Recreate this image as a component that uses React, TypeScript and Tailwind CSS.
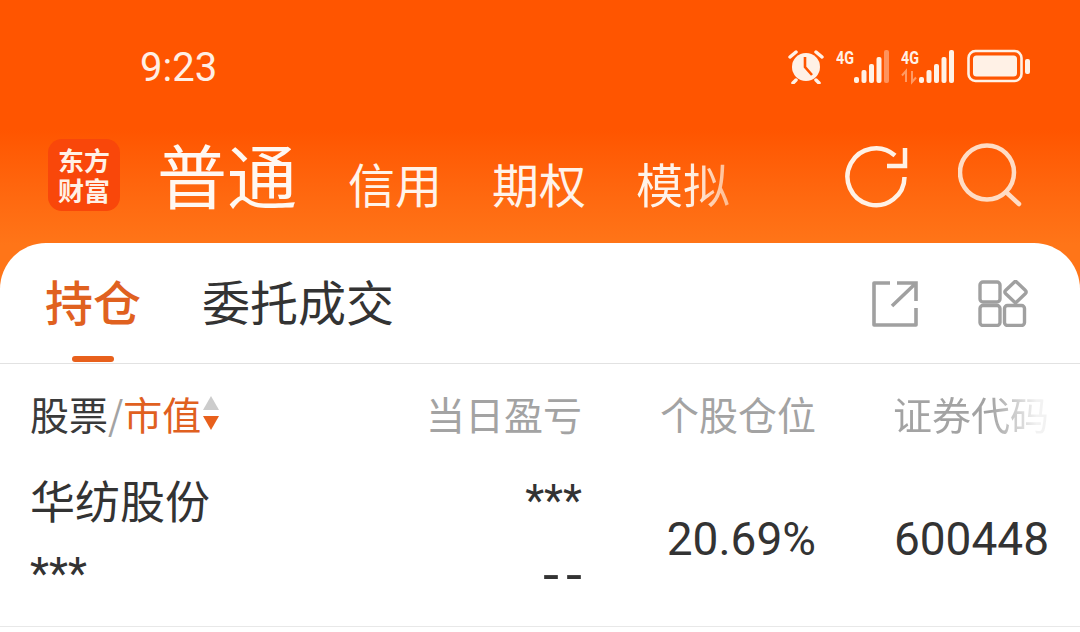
const CJK = "font-['Noto_Sans_CJK_SC','Noto_Sans',sans-serif]";

function Signal({ dim, arrows }: { dim?: boolean; arrows?: boolean }) {
  const bars = [
    { x: 18, h: 6 },
    { x: 25.5, h: 13 },
    { x: 33, h: 19 },
    { x: 40.5, h: 26 },
    { x: 48, h: 33 },
  ];
  return (
    <svg width="53" height="40" viewBox="0 -2 53 40" fill="#fff1e6">
      <text x="0" y="16" fontSize="19" fontWeight="700" fontFamily="Roboto, sans-serif" textLength="18" lengthAdjust="spacingAndGlyphs">4G</text>
      {arrows && <path d="M5 34v-11l-4 4.500M11 23v11l4-4.500" stroke="#ff9a63" strokeWidth="2" fill="none" />}
      {bars.map((b, i) => (
        <rect
          key={b.x}
          x={b.x}
          y={35 - b.h}
          width="5"
          height={b.h}
          rx="2"
          opacity={dim && i === 4 ? 0.4 : 1}
        />
      ))}
    </svg>
  );
}

export default function App() {
  return (
    <div className={`relative flex h-[632px] w-[1080px] flex-col overflow-hidden bg-white ${CJK}`}>
      <div className="h-[288px] shrink-0 bg-gradient-to-b from-[#ff5500] from-[45%] to-[#ff7518] to-[85%]">
        {/* status bar */}
        <div className="flex h-[132px] items-start justify-between pl-[140px] pr-[50px] pt-[46px]">
          <span className="mt-[2px] font-['Roboto',sans-serif] text-[40px] leading-[40px] text-[#ffefe4]">9:23</span>
          <div className="flex items-center gap-[12px]">
            <svg width="36" height="36" viewBox="0 0 36 36" fill="none">
              <circle cx="18" cy="19" r="14" fill="#fff1e6" />
              <path d="M17 9v10l7 8" stroke="#ff5500" strokeWidth="2.600" />
              <path d="M2 9l6-5M34 9l-6-5M8 32l-3 3M28 32l3 3" stroke="#fff1e6" strokeWidth="3.500" strokeLinecap="round" />
            </svg>
            <Signal dim />
            <Signal arrows />
            <svg className="ml-[1px]" width="63" height="34" viewBox="0 0 63 34" fill="none">
              <rect x="1.500" y="2" width="53" height="30" rx="7" stroke="#fff1e6" strokeWidth="2.600" />
              <rect x="6" y="6.500" width="44" height="21" rx="3.500" fill="#fff1e6" />
              <rect x="58" y="10" width="5" height="15" rx="2" fill="#fff1e6" />
            </svg>
          </div>
        </div>

        {/* account tabs */}
        <div className="flex h-[86px] items-center pl-[48px] pr-[58px]">
          <div className="flex h-[72px] w-[72px] flex-col items-center justify-center rounded-[14px] bg-[#f9470a] text-[26px] font-bold leading-[30px] text-[#fff1e6]">
            <span>东方</span>
            <span>财富</span>
          </div>
          <span className="mb-[2px] ml-[37px] text-[70px] font-normal leading-[84px] text-[#fff8f2]">普通</span>
          <div className="ml-[51px] flex w-[400px] items-center gap-[50px] pt-[16px] text-[47px] leading-[56px] text-[#fff3ea]">
            <span>信用</span>
            <span>期权</span>
            <span className="bg-gradient-to-r from-[#fff3ea] from-[55%] to-[#ffb98c] bg-clip-text text-transparent">模拟</span>
          </div>
          <div className="ml-auto flex items-center gap-[48px]">
            <svg className="mt-[6px]" width="66" height="66" viewBox="0 0 66 66" fill="none" stroke="#fff1e6" strokeWidth="4.500">
              <path d="M60.500 32A28.500 28.500 0 1 1 51 10.500" />
              <path d="M61 3v18H43" />
            </svg>
            <svg width="64" height="64" viewBox="0 0 64 64" fill="none" stroke="#ffdcc4" strokeWidth="4.500">
              <circle cx="29" cy="29.500" r="27" />
              <path d="M48 49l13 12" strokeLinecap="round" />
            </svg>
          </div>
        </div>
      </div>

      {/* sheet overlaps the orange header */}
      <div className="-mt-[45px] flex flex-1 flex-col rounded-t-[46px] bg-white">
        <div className="flex h-[121px] shrink-0 items-start border-b border-[#e2e2e2] pl-[45px] pr-[52px] pt-[25px]">
          <div className="relative">
            <span className="text-[48px] font-medium leading-[64px] text-[#e0611f]">持仓</span>
            <div className="absolute left-[27px] top-[88px] h-[6px] w-[42px] rounded-full bg-[#e8601c]" />
          </div>
          <span className="ml-[61px] text-[48px] leading-[64px] text-[#333333]">委托成交</span>
          <div className="ml-auto mt-[12px] flex items-center gap-[60px] text-[#a0a0a0]">
            <svg width="46" height="46" viewBox="0 0 46 46" fill="none" stroke="currentColor" strokeWidth="3.600">
              <path d="M18 2H2v42h42V27" strokeLinejoin="round" />
              <path d="M25 2h19v18M43 3L20 25" />
            </svg>
            <svg width="50" height="47" viewBox="0 0 50 47" fill="none" stroke="currentColor" strokeWidth="3.400">
              <rect x="2" y="2" width="20" height="20" rx="3" />
              <rect x="2" y="25.500" width="20" height="20" rx="3" />
              <rect x="26.500" y="25.500" width="20" height="20" rx="3" />
              <path d="M37.500 1l10 9.500a2 2 0 0 1 0 3L37.500 23l-10-9.500a2 2 0 0 1 0-3z" strokeLinejoin="round" />
            </svg>
          </div>
        </div>

        <div className="grid h-[100px] shrink-0 grid-cols-[362px_190px_234px_1fr] items-center pb-[3px] pl-[30px] pr-[31px] text-[39px] leading-[48px] text-[#a3a3a3]">
          <div className="flex items-center whitespace-nowrap">
            <span className="text-[#3a3a3a]">股票</span>
            <span className="text-[#a3a3a3]">/</span>
            <span className="text-[#e0601f]">市值</span>
            <div className="ml-[2px] flex flex-col gap-[6px]">
              <div className="h-0 w-0 border-x-[8px] border-b-[14px] border-x-transparent border-b-[#cccccc]" />
              <div className="h-0 w-0 border-x-[8px] border-t-[14px] border-x-transparent border-t-[#e8601c]" />
            </div>
          </div>
          <span className="text-right">当日盈亏</span>
          <span className="text-right">个股仓位</span>
          <span className="w-fit justify-self-end bg-gradient-to-r from-[#a3a3a3] from-[62%] to-[#f2f2f2] to-[92%] bg-clip-text text-transparent">证券代码</span>
        </div>

        <div className="grid h-[163px] shrink-0 grid-cols-[362px_190px_234px_1fr] items-center border-b border-[#e8e8e8] pl-[30px] pr-[31px] text-[#333333]">
          <div className="flex flex-col self-start pt-[8px]">
            <span className="text-[45px] leading-[56px]">华纺股份</span>
            <span className="mt-[28px] font-['Roboto',sans-serif] text-[44px] leading-[36px]">***</span>
          </div>
          <div className="flex flex-col items-end self-start pt-[17px] font-['Roboto',sans-serif] text-[44px] leading-[40px]">
            <span>***</span>
            <span className="mt-[36px] font-['Liberation_Mono',monospace] text-[50px] tracking-[-7px]">--</span>
          </div>
          <span className="-mt-[12px] text-right font-['Roboto',sans-serif] text-[46px]">20.69%</span>
          <span className="-mt-[12px] text-right font-['Roboto',sans-serif] text-[46px]">600448</span>
        </div>
      </div>
    </div>
  );
}
